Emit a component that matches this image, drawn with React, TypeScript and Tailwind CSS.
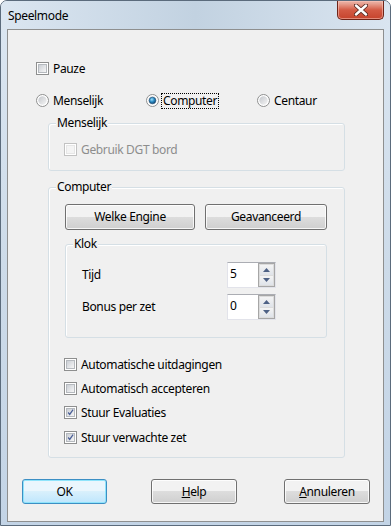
import React from "react";

const font = { fontFamily: '"Noto Sans", "Open Sans", sans-serif' };

const CheckBox = ({ checked = false, disabled = false }: { checked?: boolean; disabled?: boolean }) => (
  <span
    className={
      "w-[13px] h-[13px] shrink-0 border flex items-center justify-center bg-white " +
      (disabled ? "border-[#c2c2c2]" : "border-[#8e8f8f]")
    }
  >
    <span
      className={
        "w-[9px] h-[9px] border flex items-center justify-center " +
        (disabled
          ? "border-[#e6e6e6] bg-[#f4f4f4]"
          : "border-[#b5b9be] bg-linear-to-br from-[#cbcfd5] to-[#f6f6f6]")
      }
    >
      {checked && (
        <svg width="9" height="9" viewBox="0 0 9 9" className="-mt-[1px]">
          <path d="M1.5 4.5 L3.5 7 L7.8 0.8" fill="none" stroke="#4a5f97" strokeWidth="1.6" />
        </svg>
      )}
    </span>
  </span>
);

const Radio = ({ checked = false }: { checked?: boolean }) => (
  <svg width="13" height="13" viewBox="0 0 13 13" className="shrink-0">
    <defs>
      <linearGradient id="rg" x1="0" y1="0" x2="1" y2="1">
        <stop offset="0" stopColor="#c4c7cc" />
        <stop offset="1" stopColor="#f5f5f5" />
      </linearGradient>
      <radialGradient id="rd" cx="0.4" cy="0.35" r="0.7">
        <stop offset="0" stopColor="#9fe0fb" />
        <stop offset="0.5" stopColor="#2b8bc4" />
        <stop offset="1" stopColor="#0d3f6a" />
      </radialGradient>
    </defs>
    <circle cx="6.5" cy="6.5" r="6" fill="#fff" stroke="#8e8f8f" />
    <circle cx="6.5" cy="6.5" r="4.2" fill="url(#rg)" />
    {checked && <circle cx="6.5" cy="6.5" r="3.3" fill="url(#rd)" stroke="#1b4d77" strokeWidth="0.6" />}
  </svg>
);

const Button = ({ children, w, primary = false }: { children: React.ReactNode; w: string; primary?: boolean }) => (
  <div
    className={
      "h-full rounded-[3px] border flex items-center justify-center text-black " +
      w +
      (primary
        ? " border-[#3c8fc4] bg-linear-to-b from-[#eaf6fd] from-50% via-[#d9f0fc] via-50% to-[#bee6fd] shadow-[inset_0_0_0_1px_#8fe4fb]"
        : " border-[#707070] bg-linear-to-b from-[#f2f2f2] from-50% via-[#dddddd] via-50% to-[#cfcfcf] shadow-[inset_0_0_0_1px_rgba(255,255,255,0.8)]")
    }
  >
    {children}
  </div>
);

const Group = ({ label, className, children }: { label: string; className: string; children?: React.ReactNode }) => (
  <div className={"relative border border-[#d5dfe5] rounded-[3px] shadow-[inset_1px_1px_0_#ffffff] " + className}>
    <span className="absolute left-[7px] -top-[9px] px-[1px] bg-[#f0f0f0] leading-[16px] text-black">{label}</span>
    {children}
  </div>
);

const Spin = ({ value }: { value: string }) => (
  <div className="w-[49px] h-[26px] flex border border-[#e2e3ea] border-t-[#abadb3] bg-white">
    <span className="flex-1 pl-[2px] pt-[3px] leading-[16px] text-black">{value}</span>
    <div className="w-[17px] flex flex-col border border-[#a6a6a6] bg-[#dcdcdc] gap-[1px] p-[1px]">
      <div className="flex-1 bg-linear-to-b from-[#f4f4f4] to-[#dfe3e9] flex items-center justify-center">
        <svg width="7" height="4" viewBox="0 0 7 4"><path d="M0 4 L3.5 0 L7 4 Z" fill="#4d6185" /></svg>
      </div>
      <div className="flex-1 bg-linear-to-b from-[#f4f4f4] to-[#dfe3e9] flex items-center justify-center">
        <svg width="7" height="4" viewBox="0 0 7 4"><path d="M0 0 L7 0 L3.5 4 Z" fill="#4d6185" /></svg>
      </div>
    </div>
  </div>
);

const CheckRow = ({ label, checked, disabled, className = "" }: { label: string; checked?: boolean; disabled?: boolean; className?: string }) => (
  <div className={"h-[13px] flex items-center gap-[4px] " + className}>
    <CheckBox checked={checked} disabled={disabled} />
    <span className={"leading-[16px] whitespace-nowrap " + (disabled ? "text-[#8d8d8d]" : "text-black")}>{label}</span>
  </div>
);

export default function App() {
  return (
    <div
      className="relative w-[391px] h-[526px] overflow-hidden rounded-t-[7px] border border-[#5b6b7c] bg-linear-to-b from-[#dce7f2] via-[#cddbe9] to-[#c3d4e6] text-[12px] tracking-[-0.35px]"
      style={font}
    >
      {/* title bar */}
      <div className="h-[28px] pl-[7px] flex items-center bg-linear-to-r from-[#dbe6f1] via-[#c2d2e1] to-[#dae5f0]">
        <span className="text-black text-[12px] pt-[1px]">Speelmode</span>
      </div>
      <div className="absolute top-0 right-[6px] w-[47px] h-[19px] rounded-b-[5px] border border-t-0 border-[#6e2418] bg-linear-to-b from-[#e9a99b] from-10% via-[#d35a44] via-50% to-[#c6432c] shadow-[inset_0_0_0_1px_rgba(255,210,200,0.5)] flex items-center justify-center">
        <svg width="14" height="12" viewBox="0 0 14 12">
          <path d="M2 1.5 L12 10.5 M12 1.5 L2 10.5" stroke="#5a2a22" strokeWidth="4.2" strokeLinecap="round" />
          <path d="M2 1.5 L12 10.5 M12 1.5 L2 10.5" stroke="#ffffff" strokeWidth="2.4" strokeLinecap="round" />
        </svg>
      </div>

      {/* client panel */}
      <div className="ml-[6px] w-[377px] h-[493px] border border-[#8e8f8f] bg-[#f0f0f0] flex flex-col">
        <CheckRow label="Pauze" className="mt-[32px] ml-[28px]" />

        <div className="mt-[19px] ml-[28px] h-[13px] flex items-center">
          <div className="w-[110px] flex items-center gap-[4px]">
            <Radio />
            <span className="leading-[16px]">Menselijk</span>
          </div>
          <div className="w-[111px] flex items-center gap-[2px]">
            <Radio checked />
            <span className="leading-[14px] px-[1px] border border-dotted border-black">Computer</span>
          </div>
          <div className="flex items-center gap-[4px]">
            <Radio />
            <span className="leading-[16px]">Centaur</span>
          </div>
        </div>

        <Group label="Menselijk" className="mt-[16px] ml-[40px] w-[297px] h-[48px] shrink-0">
          <CheckRow label="Gebruik DGT bord" disabled className="mt-[19px] ml-[15px]" />
        </Group>

        <Group label="Computer" className="mt-[16px] ml-[40px] w-[297px] h-[271px] shrink-0 flex flex-col">
          <div className="mt-[16px] ml-[16px] h-[26px] flex gap-[10px]">
            <Button w="w-[130px]">Welke Engine</Button>
            <Button w="w-[122px]">Geavanceerd</Button>
          </div>

          <Group label="Klok" className="mt-[14px] ml-[16px] w-[262px] h-[94px] shrink-0">
            <div className="mt-[17px] ml-[16px] h-[26px] flex items-center">
              <span className="w-[145px]">Tijd</span>
              <Spin value="5" />
            </div>
            <div className="mt-[6px] ml-[16px] h-[26px] flex items-center">
              <span className="w-[145px]">Bonus per zet</span>
              <Spin value="0" />
            </div>
          </Group>

          <CheckRow label="Automatische uitdagingen" className="mt-[20px] ml-[15px]" />
          <CheckRow label="Automatisch accepteren" className="mt-[11px] ml-[15px]" />
          <CheckRow label="Stuur Evaluaties" checked className="mt-[11px] ml-[15px]" />
          <CheckRow label="Stuur verwachte zet" checked className="mt-[12px] ml-[15px]" />
        </Group>

        <div className="mt-[21px] ml-[14px] h-[25px] flex">
          <Button w="w-[85px]" primary>OK</Button>
          <div className="ml-[44px] h-full">
            <Button w="w-[86px]">
              <span><span className="underline">H</span>elp</span>
            </Button>
          </div>
          <div className="ml-[47px] h-full">
            <Button w="w-[86px]">
              <span><span className="underline">A</span>nnuleren</span>
            </Button>
          </div>
        </div>
      </div>
    </div>
  );
}
